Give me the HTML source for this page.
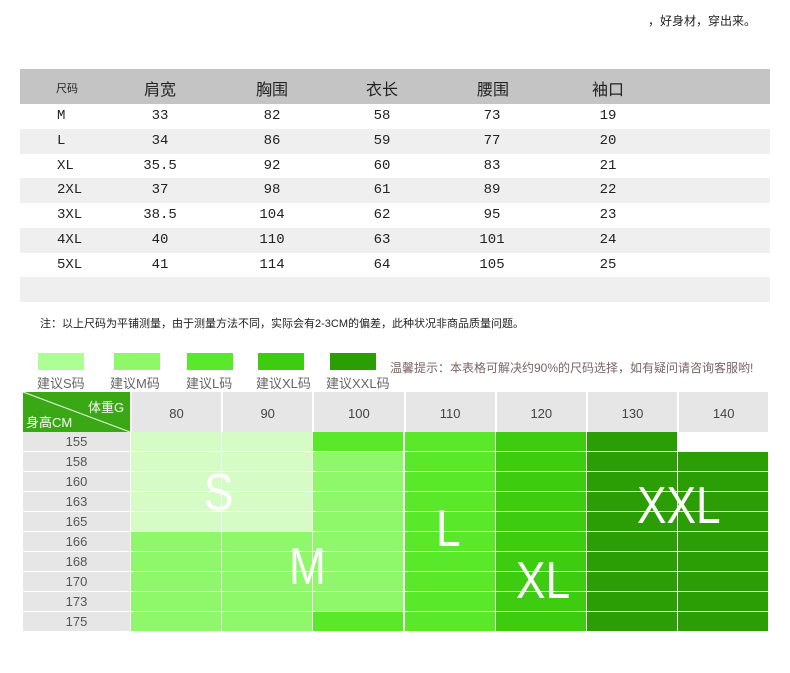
<!DOCTYPE html>
<html><head><meta charset="utf-8"><style>
*{margin:0;padding:0;box-sizing:border-box}
body{width:790px;height:673px;background:#fff;position:relative;overflow:hidden;font-family:"Liberation Sans","Noto Sans CJK SC",sans-serif;color:#222}
.a{position:absolute;white-space:nowrap}
.t1 .r{position:absolute;left:20px;width:750px;height:25px}
.t1 .c{position:absolute;top:0;height:25px;line-height:25px;font-family:"Liberation Mono","Noto Sans CJK SC",monospace;font-size:14px;text-align:center;width:60px;margin-left:-30px}
.g div{position:absolute}
</style></head><body>
<div class="a" style="left:648px;top:12px;font-size:12px;">，好身材，穿出来。</div>

<div class="t1">
<div class="r" style="top:69px;height:35px;background:#c4c4c4"></div>
<div class="a" style="left:56px;top:80px;font-size:11px">尺码</div>
<div class="a" style="left:144px;top:76px;font-size:16px">肩宽</div>
<div class="a" style="left:256px;top:76px;font-size:16px">胸围</div>
<div class="a" style="left:366px;top:76px;font-size:16px">衣长</div>
<div class="a" style="left:477px;top:76px;font-size:16px">腰围</div>
<div class="a" style="left:592px;top:76px;font-size:16px">袖口</div>
<div id="rows"></div>
</div>

<div class="a" style="left:40px;top:315px;font-size:11px">注：以上尺码为平铺测量，由于测量方法不同，实际会有2-3CM的偏差，此种状况非商品质量问题。</div>

<div class="a" style="left:38px;top:353px;width:46px;height:17px;background:#aefe96"></div>
<div class="a" style="left:114px;top:353px;width:46px;height:17px;background:#8ef86a"></div>
<div class="a" style="left:187px;top:353px;width:46px;height:17px;background:#5ae82a"></div>
<div class="a" style="left:258px;top:353px;width:46px;height:17px;background:#3ecc10"></div>
<div class="a" style="left:330px;top:353px;width:46px;height:17px;background:#2a9e04"></div>
<div class="a" style="left:37px;top:373px;font-size:13px;color:#666">建议S码</div>
<div class="a" style="left:110px;top:373px;font-size:13px;color:#666">建议M码</div>
<div class="a" style="left:186px;top:373px;font-size:13px;color:#666">建议L码</div>
<div class="a" style="left:256px;top:373px;font-size:13px;color:#666">建议XL码</div>
<div class="a" style="left:326px;top:373px;font-size:13px;color:#666">建议XXL码</div>
<div class="a" style="left:390px;top:359px;font-size:12px;color:#7a6565">温馨提示：本表格可解决约90%的尺码选择，如有疑问请咨询客服哟!</div>

<div class="g" id="g"></div>

<script>
var d=[["M",33,82,58,73,19],["L",34,86,59,77,20],["XL","35.5",92,60,83,21],["2XL",37,98,61,89,22],["3XL","38.5",104,62,95,23],["4XL",40,110,63,101,24],["5XL",41,114,64,105,25]];
var xs=[72,160,272,382,492,608],h="";
for(var i=0;i<8;i++){var y=104+i*24.75;h+='<div class="r" style="top:'+y+'px;background:'+(i%2?'#efefef':'#fff')+'">';
if(i<7)for(var j=0;j<6;j++)h+='<div class="c" style="left:'+(j==0?52:xs[j]-20)+'px;'+(j==0?'text-align:left;margin-left:-15px':'')+'">'+d[i][j]+'</div>';h+='</div>';}
document.getElementById('rows').innerHTML=h;
var S='#d4fcc4',M='#8ef86a',L='#5ae82a',X='#3ecc10',Z='#2a9e04',W='#fff';
var cols=[[S,S,S,S,S,M,M,M,M,M],[S,S,S,S,S,M,M,M,M,M],[L,M,M,M,M,M,M,M,M,L],[L,L,L,L,L,L,L,L,L,L],[X,X,X,X,X,X,X,X,X,X],[Z,Z,Z,Z,Z,Z,Z,Z,Z,Z],[W,Z,Z,Z,Z,Z,Z,Z,Z,Z]];
var wt=[80,90,100,110,120,130,140],hs=[155,158,160,163,165,166,168,170,173,175],g="";
g+='<div style="left:23px;top:392px;width:745px;height:40px;background:#e6e6e6"></div>';
g+='<div style="left:23px;top:392px;width:107px;height:40px;background:#3aa815"></div>';
g+='<svg style="position:absolute;left:23px;top:392px" width="107" height="40"><line x1="0" y1="0" x2="107" y2="40" stroke="#fff" stroke-width="1"/></svg>';
g+='<div style="left:88px;top:397px;color:#fff;font-size:13px">体重G</div>';
g+='<div style="left:26px;top:412px;color:#fff;font-size:13px">身高CM</div>';
for(var c=0;c<7;c++){var x=130+c*91.2;g+='<div style="left:'+x+'px;top:392px;width:91px;height:40px;line-height:44px;text-align:center;font-size:13px;color:#444;border-left:2px solid #fff">'+wt[c]+'</div>';
for(var r=0;r<10;r++)g+='<div style="left:'+(x+1)+'px;top:'+(432+r*20)+'px;width:90px;height:19px;background:'+cols[c][r]+'"></div>';}
for(var r=0;r<10;r++)g+='<div style="left:23px;top:'+(432+r*20)+'px;width:107px;height:19px;background:#e6e6e6;text-align:center;line-height:19px;font-size:13px;color:#555">'+hs[r]+'</div>';
var big='position:absolute;color:#fff;font-size:52px;line-height:52px;transform:scaleX(0.85);transform-origin:0 0;';
g+='<div style="'+big+'left:204px;top:467px">S</div>';
g+='<div style="'+big+'left:289px;top:541px">M</div>';
g+='<div style="'+big+'left:436px;top:503px">L</div>';
g+='<div style="'+big+'left:516px;top:555px">XL</div>';
g+='<div style="'+big+'left:637px;top:480px">XXL</div>';
document.getElementById('g').innerHTML=g;
</script>
</body></html>
